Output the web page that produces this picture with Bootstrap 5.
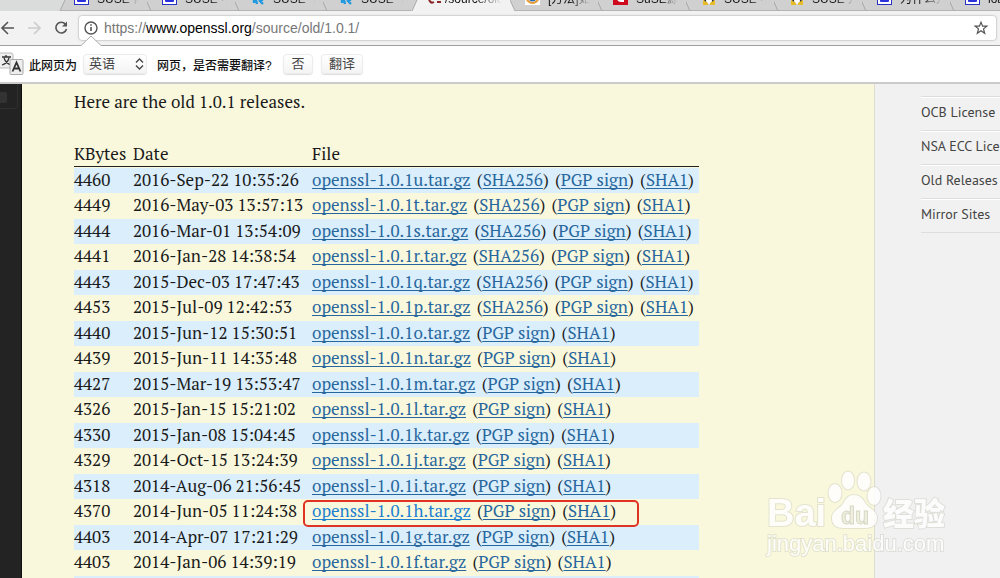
<!DOCTYPE html>
<html lang="zh-CN">
<head>
<meta charset="utf-8">
<meta name="viewport" content="width=device-width, initial-scale=1">
<title>/source/old/1.0.1</title>
<link href="https://cdn.jsdelivr.net/npm/bootstrap@5.3.0/dist/css/bootstrap.min.css" rel="stylesheet">
<style>
  :root { --cjk: "Noto Sans CJK SC"; }
  body { font-family: "Liberation Sans", var(--cjk), sans-serif; color: #1a1a1a; background: #f1f1f1; }

  /* tab strip */
  .tab-strip { height: 11px; background: #dadcdc; padding-left: 59px; }
  .browser-tab { flex: 0 0 88px; min-width: 0; height: 27px; font-size: 12px; line-height: 16px; color: #111; padding: 7px 8px 3px 16px; background: #d0d0d0; border-bottom: 1px solid #b4b4b4; text-decoration: none; white-space: nowrap; }
  .browser-tab .tab-title { min-width: 0; -webkit-mask-image: linear-gradient(90deg, #000 55%, transparent); mask-image: linear-gradient(90deg, #000 55%, transparent); }
  .browser-tab > svg { flex: none; width: 15px; height: 16px; }
  .browser-tab > .slant { width: 7px; height: 11px; margin-left: -16px; align-self: flex-end; margin-bottom: -4px; }
  .browser-tab.on { background: #f2f2f2; flex-basis: 99px; border-color: #f2f2f2; }

  /* toolbar */
  .toolbar { background: #f2f2f2; height: 35px; border-bottom: 1px solid #a0a0a0; padding: 0 3px 0 0; }
  .tool-btn { border: 0; background: none; padding: 0; width: 27px; line-height: 0; }
  .tool-btn.reload { width: 24px; }
  .tool-btn.star { width: 14px; }
  .address { background: #fff; border: 1px solid #d4d4d4; border-radius: 4px; height: 26px; box-shadow: 0 0 0 1px #ececec; }
  .address a { font-size: 14px; line-height: 24px; color: #777; text-decoration: none; }
  .address b { font-weight: 400; color: #000; }
  .bubble-arrow { position: absolute; left: 80px; top: 24px; z-index: 2; }

  /* translate bar */
  .translate-bar { background: #fff; height: 38px; border-bottom: 2px solid #cbcbcb; font-size: 12px; color: #111; font-weight: 500; }
  .bar-label { width: 54px; padding-top: 3px; }
  .bar-question { width: 136px; padding: 3px 0 0 10px; }
  .pill { height: 20px; min-width: 30px; font: 13px/18px "Liberation Sans", var(--cjk), sans-serif; color: #444; border: 1px solid #ececec; border-radius: 4px; background: linear-gradient(#fff, #f4f4f4); box-shadow: 0 1px 1px #ddd; padding: 0 7px; }
  .pill-select { width: 64px; padding: 0 0 0 5px; appearance: none; -webkit-appearance: none; }
  .pill-wrap svg { position: absolute; right: 3px; top: 4px; pointer-events: none; }

  /* page */
  .web-page { background: #f1f1f1; }
  .rail { flex: 0 0 22px; background: #232323; border-right: 1px solid #111; }
  .rail-box { height: 25px; width: 18px; border: solid #303030; border-width: 0 1px 1px 0; border-radius: 0 0 4px 0; padding-top: 8px; }
  .rail-box div { width: 7px; height: 11px; background: #333; border-radius: 0 2px 2px 0; }
  .paper { background: #f9f8dd; border-right: 1px solid #dcdcd0; padding: 5px 0 0 52px; font: 17px/25px "PT Serif", "Noto Serif", "Liberation Serif", serif; min-width: 0; }
  .paper p { margin: 0 0 26px; }
  .releases { width: 625px; table-layout: fixed; border-collapse: separate; border-spacing: 0; line-height: 23px; }
  .releases th { font-weight: 400; padding: 0; height: 27px; border-bottom: 1px solid #222; }
  .releases td { padding: 0; white-space: nowrap; height: 26px; vertical-align: top; }
  .releases tbody tr:nth-child(odd) td { background: #daeefb; height: 25px; }
  .releases tbody::before { content: ""; display: table-row; height: 1px; }
  .releases a { color: #28679e; text-decoration: underline; text-decoration-skip-ink: none; text-underline-offset: 2px; text-decoration-thickness: 1px; }
  .releases a.hot { color: #1c7fd0; }
  .releases .extra { margin-left: 2px; }
  .picked { position: relative; }
  .picked::after { content: ""; position: absolute; left: -9px; top: 1px; width: 336px; height: 27px; border: 2px solid #df3424; border-radius: 5px; z-index: 1; pointer-events: none; }
  .side { flex: 0 0 125px; padding: 12px 0 0 46px; font: 14px/28px "PT Sans", "Noto Sans", sans-serif; overflow: hidden; }
  .side ul { border-top: 1px solid #ddd; }
  .side li { border-top: 1px solid #fff; border-bottom: 1px solid #dedede; height: 34px; white-space: nowrap; }
  .side a { color: #444; text-decoration: none; }
  .watermark { position: absolute; right: 46px; bottom: 18px; z-index: 3; pointer-events: none; }
</style>
</head>
<body class="vh-100 overflow-hidden d-flex flex-column position-relative">
<svg width="0" height="0" class="position-absolute" aria-hidden="true">
  <symbol id="paw" viewBox="0 0 15 16"><rect x=".5" y=".5" width="14" height="13" fill="#fff" stroke="#2930c4"/><rect x="3" y="2" width="9" height="9" rx="1" fill="#2930dc"/></symbol>
  <symbol id="k" viewBox="0 0 15 16"><path d="M4 2v10M7 13l-1-4 3-4M9 9l4 4M12 3v7" stroke="#2199e0" stroke-width="2.4" fill="none"/></symbol>
  <symbol id="tux" viewBox="0 0 15 16"><path d="M3 13c0-4 1-10 5-12 4 2 5 8 5 12z" fill="#333"/><ellipse cx="8" cy="9" rx="3" ry="4" fill="#fff"/><path d="M2 9l5 3v2H2zM14 9l-5 3v2h5z" fill="#e8bb28"/></symbol>
  <symbol id="sl" viewBox="0 0 7 11"><path d="M0 0h6L1 11H0z" fill="#dadcdc"/><path d="M6 0L1 11" stroke="#aaa"/></symbol>
  <symbol id="bs" viewBox="0 0 7 11"><path d="M-1 0l5 11" stroke="#a8a8a8"/></symbol>
</svg>

<nav class="tab-strip d-flex align-items-end overflow-hidden flex-shrink-0" aria-label="标签页">
  <a href="#" class="browser-tab d-flex"><svg class="slant"><use href="#sl"/></svg><svg class="ms-2"><use href="#paw"/></svg><span class="tab-title ms-2 overflow-hidden">SUSE 修改</span></a>
  <a href="#" class="browser-tab d-flex"><svg class="slant"><use href="#bs"/></svg><svg class="ms-2"><use href="#paw"/></svg><span class="tab-title ms-2 overflow-hidden">SUSE 中升</span></a>
  <a href="#" class="browser-tab d-flex"><svg class="slant"><use href="#bs"/></svg><svg class="ms-2"><use href="#k"/></svg><span class="tab-title ms-2 overflow-hidden">SUSE 下升</span></a>
  <a href="#" class="browser-tab d-flex"><svg class="slant"><use href="#bs"/></svg><svg class="ms-2"><use href="#k"/></svg><span class="tab-title ms-2 overflow-hidden">SUSE 下升</span></a>
  <a href="#" class="browser-tab on d-flex"><svg class="slant"><path d="M0 0h6L1 11H0z" fill="#d0d0d0"/><path d="M6 0L1 11" stroke="#aaa"/></svg><svg class="ms-2"><path d="M8 6a3 3 0 1 0 0 5M11 11h4" stroke="#8c2a2a" stroke-width="2" fill="none"/></svg><span class="tab-title ms-1 overflow-hidden">/source/old</span></a>
  <a href="#" class="browser-tab d-flex"><svg class="slant"><path d="M0 0l5 11H0z" fill="#f2f2f2"/><path d="M0 0l5 11" stroke="#aaa"/></svg><svg class="ms-2"><path d="M0 0h15v14H0z" fill="#fff"/><circle cx="7.500" cy="6" r="6" fill="none" stroke="#e79c34" stroke-width="2"/><circle cx="7.500" cy="6" r="3.500" fill="none" stroke="#2d6fb5" stroke-width="2"/></svg><span class="tab-title ms-2 overflow-hidden">[方法]如何</span></a>
  <a href="#" class="browser-tab d-flex"><svg class="slant"><use href="#bs"/></svg><svg class="ms-2"><path d="M0 0h15v14H0z" fill="#cf0a1c"/><path d="M11 3c-6-2-9 7-3 7h3" stroke="#fff" stroke-width="2" fill="none"/></svg><span class="tab-title ms-2 overflow-hidden">SuSE源升</span></a>
  <a href="#" class="browser-tab d-flex"><svg class="slant"><use href="#bs"/></svg><svg class="ms-2"><use href="#tux"/></svg><span class="tab-title ms-2 overflow-hidden">SUSE 中升</span></a>
  <a href="#" class="browser-tab d-flex"><svg class="slant"><use href="#bs"/></svg><svg class="ms-2"><use href="#tux"/></svg><span class="tab-title ms-2 overflow-hidden">SUSE 升级</span></a>
  <a href="#" class="browser-tab d-flex"><svg class="slant"><use href="#bs"/></svg><svg class="ms-2"><use href="#paw"/></svg><span class="tab-title ms-2 overflow-hidden">为什么升</span></a>
  <a href="#" class="browser-tab d-flex"><svg class="slant"><use href="#bs"/></svg><svg class="ms-2"><use href="#paw"/></svg><span class="tab-title ms-2 overflow-hidden">load</span></a>
</nav>

<header class="toolbar d-flex align-items-center flex-shrink-0 position-relative">
  <button class="tool-btn text-start" aria-label="后退"><svg width="15" height="14" fill="none" stroke="#555" stroke-width="1.600"><path d="M14 7H2M8 1L2 7l6 6"/></svg></button>
  <button class="tool-btn text-start" aria-label="前进"><svg width="14" height="14" fill="none" stroke="#ccc" stroke-width="1.600"><path d="M1 7h12M7 1l6 6-6 6"/></svg></button>
  <button class="tool-btn reload text-start" aria-label="刷新"><svg width="14" height="14"><path d="M11.500 3.200A5.400 5.400 0 1 0 12.500 8" fill="none" stroke="#555" stroke-width="1.600"/><path d="M13 .5v5H8z" fill="#555"/></svg></button>
  <div class="address flex-grow-1 d-flex align-items-center ps-1 pe-2 gap-1">
    <svg class="flex-shrink-0" width="17" height="14" fill="none" stroke="#555"><circle cx="8" cy="7" r="6" stroke-width="1.400"/><path d="M8 6v4M8 3.200v1.500" stroke-width="1.600"/></svg>
    <a class="flex-grow-1" href="#">https://<b>www.openssl.org</b>/source/old/1.0.1/</a>
    <button class="tool-btn star" aria-label="收藏"><svg width="14" height="14"><path d="M7 1.200l1.600 4h4.200L9.500 7.900l1.200 4.400L7 9.800l-3.700 2.500 1.200-4.400L1.200 5.200h4.200z" fill="none" stroke="#555" stroke-width="1.200"/></svg></button>
  </div>
  <svg class="bubble-arrow" width="22" height="12"><path d="M0 12V11L11 1 22 11v1z" fill="#fff"/><path d="M0 10.500h1L11 1l10 9.500h1" fill="none" stroke="#aaa"/></svg>
</header>

<section class="translate-bar d-flex align-items-center flex-shrink-0">
  <svg class="flex-shrink-0" width="29" height="28"><rect x="-5" y="3" width="18" height="15" rx="2" fill="#eee" stroke="#bbb"/><path d="M2 7h9M6 5v2M9 8c-1 4-4 6-7 7M4 8c1 3 4 6 7 7" stroke="#333" stroke-width="1.300" fill="none"/><rect x="10" y="9.500" width="13" height="15" rx="1" fill="#eee" stroke="#aaa"/><path d="M12.500 21.500l4-9 4 9M14 18.500h5" stroke="#333" stroke-width="1.800" fill="none"/></svg>
  <label for="lang" class="bar-label">此网页为</label>
  <span class="pill-wrap position-relative d-flex">
    <select id="lang" class="pill pill-select"><option>英语</option></select>
    <svg width="9" height="12" fill="none" stroke="#444" stroke-width="1.300"><path d="M1 4.500l3.500-3.500L8 4.500M1 7.500L4.500 11 8 7.500"/></svg>
  </span>
  <span class="bar-question text-nowrap">网页，是否需要翻译?</span>
  <button class="pill">否</button>
  <button class="pill ms-2">翻译</button>
</section>

<div class="web-page d-flex flex-grow-1 overflow-hidden">
  <div class="rail"><div class="rail-box"><div></div></div></div>
  <main class="paper flex-grow-1">
    <p>Here are the old 1.0.1 releases.</p>
    <table class="releases">
      <colgroup><col style="width:59px"><col style="width:179px"><col></colgroup>
      <thead><tr><th>KBytes</th><th>Date</th><th>File</th></tr></thead>
      <tbody id="rows"></tbody>
    </table>
  </main>
  <aside class="side">
    <ul class="list-unstyled m-0">
      <li><a href="#">OCB License</a></li>
      <li><a href="#">NSA ECC License</a></li>
      <li><a href="#">Old Releases</a></li>
      <li><a href="#">Mirror Sites</a></li>
    </ul>
  </aside>
</div>

<svg class="watermark" width="190" height="96" fill="#fff" stroke="#c8c8bc" stroke-opacity=".5" opacity=".85" aria-hidden="true">
  <g paint-order="stroke" stroke-width="2">
    <text x="3" y="62" font-family="Liberation Sans" font-weight="700" font-size="38">Bai</text>
    <ellipse cx="71" cy="29" rx="6.500" ry="9"/><ellipse cx="84" cy="16.500" rx="6" ry="9"/><ellipse cx="100" cy="17.500" rx="6.500" ry="9"/><ellipse cx="110" cy="32" rx="6.500" ry="9"/>
    <path d="M90 31c6 0 9 4 12 9 4 5 11 7 11 14 0 8-6 10-13 10H80c-7 0-12-3-12-10 0-7 7-9 11-14 3-5 5-9 11-9z"/>
    <text x="119" y="61" font-family="Noto Sans CJK SC" font-weight="900" font-size="31">经验</text>
    <text x="3" y="87" font-family="Liberation Sans" font-size="22">jingyan.baidu.com</text>
  </g>
  <text x="77" y="60" font-family="Liberation Sans" font-weight="700" font-size="23" fill="#efeedd" stroke="#d2d2c4" stroke-opacity="1">du</text>
</svg>

<script>
  const releases = [
    ["4460", "2016-Sep-22 10:35:26", "u", 1], ["4449", "2016-May-03 13:57:13", "t", 1],
    ["4444", "2016-Mar-01 13:54:09", "s", 1], ["4441", "2016-Jan-28 14:38:54", "r", 1],
    ["4443", "2015-Dec-03 17:47:43", "q", 1], ["4453", "2015-Jul-09 12:42:53", "p", 1],
    ["4440", "2015-Jun-12 15:30:51", "o"], ["4439", "2015-Jun-11 14:35:48", "n"],
    ["4427", "2015-Mar-19 13:53:47", "m"], ["4326", "2015-Jan-15 15:21:02", "l"],
    ["4330", "2015-Jan-08 15:04:45", "k"], ["4329", "2014-Oct-15 13:24:39", "j"],
    ["4318", "2014-Aug-06 21:56:45", "i"], ["4370", "2014-Jun-05 11:24:38", "h"],
    ["4403", "2014-Apr-07 17:21:29", "g"], ["4403", "2014-Jan-06 14:39:19", "f"]
  ];
  const extra = t => ` <span class="extra">(<a href="#">${t}</a>)</span>`;
  document.getElementById("rows").innerHTML = releases.map(([kb, date, v, sha256]) =>
    `<tr><td>${kb}</td><td>${date}</td><td class="${v === "h" ? "picked" : ""}"><a href="#" class="${v === "h" ? "hot" : ""}">openssl-1.0.1${v}.tar.gz</a>` +
    (sha256 ? extra("SHA256") : "") + extra("PGP sign") + extra("SHA1") + "</td></tr>").join("") +
    '<tr><td></td><td></td><td></td></tr>';
</script>
<script src="https://cdn.jsdelivr.net/npm/bootstrap@5.3.0/dist/js/bootstrap.bundle.min.js"></script>
</body>
</html>
